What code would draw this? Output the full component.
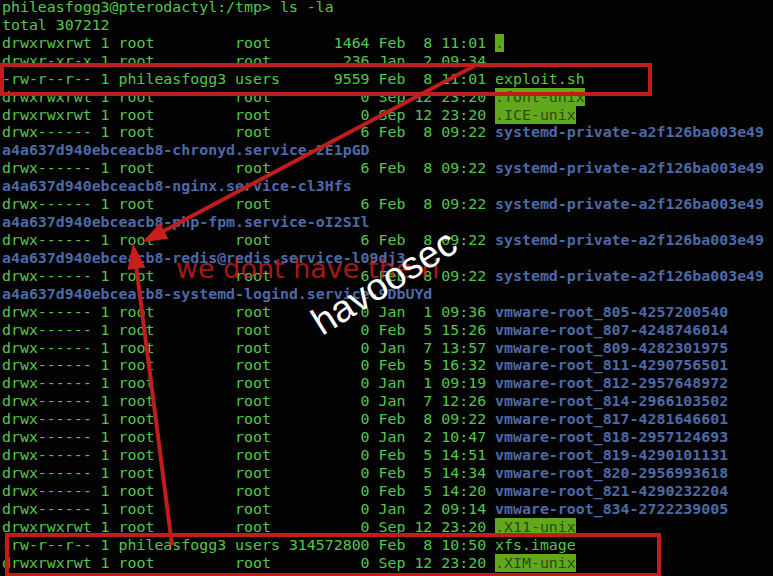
import React from "react";

type Kind = "file" | "dir" | "sticky";

type Entry = {
  perm: string;
  owner: string;
  group: string;
  size: string;
  mon: string;
  day: string;
  time: string;
  name: string;
  kind: Kind;
  wrap?: string;
};

const vmware: [string, string, string, string, string][] = [
  ["805", "Jan", "1", "09:36", "4257200540"],
  ["807", "Feb", "5", "15:26", "4248746014"],
  ["809", "Jan", "7", "13:57", "4282301975"],
  ["811", "Feb", "5", "16:32", "4290756501"],
  ["812", "Jan", "1", "09:19", "2957648972"],
  ["814", "Jan", "7", "12:26", "2966103502"],
  ["817", "Feb", "8", "09:22", "4281646601"],
  ["818", "Jan", "2", "10:47", "2957124693"],
  ["819", "Feb", "5", "14:51", "4290101131"],
  ["820", "Feb", "5", "14:34", "2956993618"],
  ["821", "Feb", "5", "14:20", "4290232204"],
  ["834", "Jan", "2", "09:14", "2722239005"],
];

const priv = (suffix: string): Entry => ({
  perm: "drwx------",
  owner: "root",
  group: "root",
  size: "6",
  mon: "Feb",
  day: "8",
  time: "09:22",
  name: "systemd-private-a2f126ba003e49",
  kind: "dir",
  wrap: "a4a637d940ebceacb8-" + suffix,
});

const entries: Entry[] = [
  { perm: "drwxrwxrwt", owner: "root", group: "root", size: "1464", mon: "Feb", day: "8", time: "11:01", name: ".", kind: "sticky" },
  { perm: "drwxr-xr-x", owner: "root", group: "root", size: "236", mon: "Jan", day: "2", time: "09:34", name: "..", kind: "dir" },
  { perm: "-rw-r--r--", owner: "phileasfogg3", group: "users", size: "9559", mon: "Feb", day: "8", time: "11:01", name: "exploit.sh", kind: "file" },
  { perm: "drwxrwxrwt", owner: "root", group: "root", size: "0", mon: "Sep", day: "12", time: "23:20", name: ".font-unix", kind: "sticky" },
  { perm: "drwxrwxrwt", owner: "root", group: "root", size: "0", mon: "Sep", day: "12", time: "23:20", name: ".ICE-unix", kind: "sticky" },
  priv("chronyd.service-2E1pGD"),
  priv("nginx.service-cl3Hfs"),
  priv("php-fpm.service-oI2SIl"),
  priv("redis@redis.service-l09dj3"),
  priv("systemd-logind.service-9DbUYd"),
  ...vmware.map(
    ([n, mon, day, time, id]): Entry => ({
      perm: "drwx------",
      owner: "root",
      group: "root",
      size: "0",
      mon,
      day,
      time,
      name: `vmware-root_${n}-${id}`,
      kind: "dir",
    })
  ),
  { perm: "drwxrwxrwt", owner: "root", group: "root", size: "0", mon: "Sep", day: "12", time: "23:20", name: ".X11-unix", kind: "sticky" },
  { perm: "-rw-r--r--", owner: "phileasfogg3", group: "users", size: "314572800", mon: "Feb", day: "8", time: "10:50", name: "xfs.image", kind: "file" },
  { perm: "drwxrwxrwt", owner: "root", group: "root", size: "0", mon: "Sep", day: "12", time: "23:20", name: ".XIM-unix", kind: "sticky" },
];

const line = "h-[17.93px] leading-[17.93px] whitespace-pre";

function Row({ e }: { e: Entry }) {
  const head = `${e.perm} 1 ${e.owner.padEnd(12)} ${e.group.padEnd(5)} ${e.size.padStart(9)} ${e.mon} ${e.day.padStart(2)} ${e.time} `;
  return (
    <>
      <div className={line}>
        {head}
        {e.kind === "file" && <span>{e.name}</span>}
        {e.kind === "dir" && <span className="font-bold text-[#4d69a6]">{e.name}</span>}
        {e.kind === "sticky" && <span className="bg-[#62a81e] text-[#2b4d12]">{e.name}</span>}
      </div>
      {e.wrap && <div className={`${line} font-bold text-[#4d69a6]`}>{e.wrap}</div>}
    </>
  );
}

export default function App() {
  return (
    <div className="relative h-[576px] w-[773px] overflow-hidden bg-[#030303]">
      <div className="mt-[-1px] pl-[2px] font-['DejaVu_Sans_Mono',monospace] text-[14.9px] text-[#55c64c]">
        <div className={line}>phileasfogg3@pterodactyl:/tmp&gt; ls -la</div>
        <div className={line}>total 307212</div>
        {entries.map((e, i) => (
          <Row key={i} e={e} />
        ))}
      </div>

      {/* annotation layer */}
      <svg className="absolute inset-0" width="773" height="576" viewBox="0 0 773 576">
        <g stroke="#c01d1d" strokeWidth="4" fill="none">
          <rect x="2" y="65" width="648" height="29" />
          <rect x="7" y="535" width="652" height="40" />
          <line x1="478" y1="64" x2="160" y2="233" />
          <line x1="172" y1="545" x2="136" y2="265" />
        </g>
        <polygon points="143,242 168.4,238.7 160,222.7" fill="#c81e1e" />
        <polygon points="133,243 145.3,267.6 127.5,270" fill="#c81e1e" />
      </svg>

      <div className="absolute left-[176px] top-[254px] font-['DejaVu_Sans',sans-serif] text-[27px] leading-[30px] text-[#d02020]/80 whitespace-pre">
        we dont have the ri
      </div>

      <div className="absolute left-[302px] top-[262px] w-[164px] -rotate-[32deg] text-center font-['Liberation_Sans',sans-serif] text-[38px] leading-[40px] text-white">
        havoosec
      </div>
    </div>
  );
}
